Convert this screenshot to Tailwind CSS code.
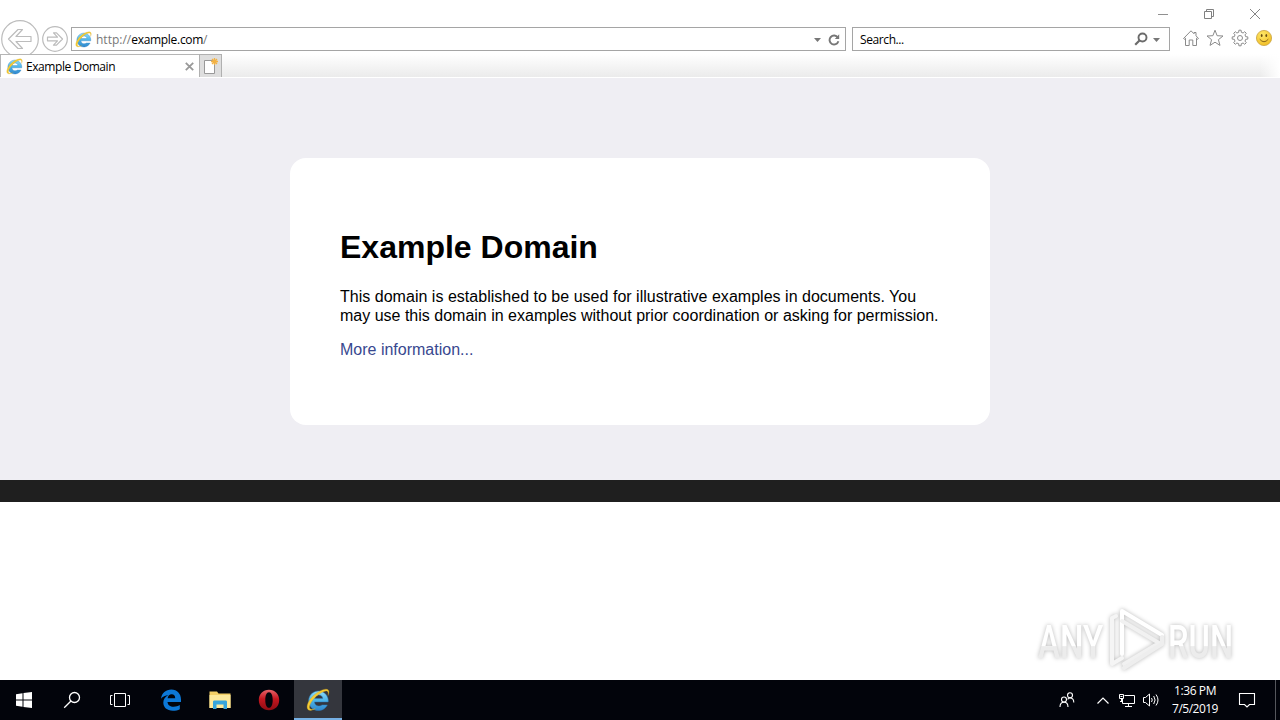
<!DOCTYPE html>
<html lang="en">

<head>
    <meta charset="UTF-8">
    <meta name="viewport" content="width=device-width, initial-scale=1.0">
    <title>Example Domain</title>
    <script src="https://cdn.jsdelivr.net/npm/@tailwindcss/browser@4"></script>
</head>

<body class="w-[1280px] h-[720px] overflow-hidden bg-white flex flex-col font-['Open_Sans',sans-serif] text-[12px] text-black">
    <!-- Shared icons -->
    <svg class="absolute w-0 h-0">
        <defs>
            <linearGradient id="ieBlue" x1="0" y1="0" x2="0" y2="1">
                <stop offset="0" stop-color="#8fdcf8" />
                <stop offset=".5" stop-color="#4db4e8" />
                <stop offset="1" stop-color="#2f86cc" />
            </linearGradient>
            <radialGradient id="smile" cx=".4" cy=".3" r=".8">
                <stop offset="0" stop-color="#ffe96b" />
                <stop offset="1" stop-color="#efb81c" />
            </radialGradient>
            <linearGradient id="operaRed" x1="0" y1="0" x2="0" y2="1">
                <stop offset="0" stop-color="#e8646a" />
                <stop offset=".45" stop-color="#c4161f" />
                <stop offset="1" stop-color="#8d0d14" />
            </linearGradient>
        </defs>
        <symbol id="ie" viewBox="0 0 24 24">
            <path d="M21.300 17A9.800 9.800 0 1 1 22.200 13.900H8.400C8.700 16.600 10.300 18 12.700 18C14.200 18 15.300 17.700 16 17ZM8.500 10.600H16.800C16.600 8.400 15 7 12.700 7S8.800 8.400 8.500 10.600Z" fill="url(#ieBlue)" stroke="#2c7fc0" stroke-width=".5" />
            <path d="M22 7.600C23.500 4.400 23.200 1.900 21.100 1.300C17.200.3 8.700 4.900 4 11.500C.9 15.900.2 20.300 2.500 21.900C4.300 23 7 22.100 9.500 20.600C6.500 21.800 4.300 21.700 3.700 20.300C2.700 17.800 5.600 12.600 10.300 8.300C14.800 4.300 19.600 2.100 21.300 3.200C22.300 3.900 22.400 5.500 22 7.600Z" fill="#f5cc35" stroke="#c99a1a" stroke-width=".3" />
        </symbol>
    </svg>

    <!-- Browser chrome -->
    <header class="h-[78px] shrink-0 flex flex-col">
        <div class="h-[27px] flex justify-end items-center pr-[19px] gap-[34px]">
            <svg class="w-3 h-3 mt-px" viewBox="0 0 12 12" fill="none" stroke="#909090"><path d="M1 6.500H11" /></svg>
            <svg class="w-3 h-3 mt-px" viewBox="0 0 12 12" fill="none" stroke="#808080"><path d="M1.500 3.500H8.500V10.500H1.500ZM3.500 3.500V1.500H10.500V8.500H8.500" /></svg>
            <svg class="w-3 h-3 mt-px" viewBox="0 0 12 12" fill="none" stroke="#858585"><path d="M1 1L11 11M11 1L1 11" /></svg>
        </div>

        <div class="h-6 flex items-center">
            <svg class="w-[38px] h-[38px] ml-px -my-2 shrink-0" viewBox="0 0 38 38" fill="#fff" stroke="#bcbcbc" stroke-width="1.200">
                <circle cx="19" cy="19" r="18.300" />
                <path d="M7.500 19L17 9.500H21.500L15 16.500H30V21.500H15L21.500 28.500H17Z" stroke-linejoin="round" />
            </svg>
            <svg class="w-[26px] h-[26px] ml-[3px] -my-1 shrink-0" viewBox="0 0 26 26" fill="#fff" stroke="#bcbcbc" stroke-width="1.200">
                <circle cx="13" cy="13" r="12.300" />
                <path d="M20.500 13L14.500 6.800H11.500L15.500 11.200H5.500V14.800H15.500L11.500 19.200H14.500Z" stroke-linejoin="round" />
            </svg>
            <div class="w-[775px] h-6 ml-[3px] border border-[#a5a5a5] flex items-center pl-[3px] pr-[5px]">
                <svg class="w-[17px] h-[17px]"><use href="#ie" /></svg>
                <span class="ml-1 pt-0.5 text-[#777]">http://<span class="text-black tracking-[-0.3px]">example.com</span>/</span>
                <svg class="ml-auto w-[7px] h-1 mt-px" viewBox="0 0 7 4"><path d="M0 0H7L3.500 4Z" fill="#777" /></svg>
                <svg class="ml-[7px] w-3 h-3 mt-px" viewBox="0 0 12 12" fill="none"><path d="M9.800 3.500A4.500 4.500 0 1 0 10.400 7.300" stroke="#777" stroke-width="1.900" /><path d="M6.800 4.900H11.200V.3Z" fill="#777" /></svg>
            </div>
            <div class="w-[318px] h-6 ml-1.5 border border-[#a5a5a5] flex items-center pl-[7px] pr-[9px]">
                <span class="pt-0.5 tracking-[-0.4px]">Search...</span>
                <svg class="ml-auto w-[14px] h-[14px]" viewBox="0 0 14 14" fill="none" stroke="#6b6b6b"><circle cx="8.500" cy="5.500" r="4" stroke-width="1.900" /><path d="M5.700 8.300L1.200 12.800" stroke-width="2.200" /></svg>
                <svg class="ml-[5px] w-[7px] h-1 mt-px" viewBox="0 0 7 4"><path d="M0 0H7L3.500 4Z" fill="#777" /></svg>
            </div>
            <div class="flex items-center ml-[12px] gap-[6.300px] -mt-0.5">
                <svg class="w-[18px] h-[18px]" viewBox="0 0 18 18" fill="none" stroke="#8b8b8b" stroke-width="1"><path d="M1.500 9.500L9 1.800L12 4.800V3.500H14V6.800L16.500 9.500L15.700 10.300L14.500 9.200V16.500H10.800V11H7.200V16.500H3.500V9.200L2.300 10.300Z" stroke-linejoin="round" /></svg>
                <svg class="w-[18px] h-[18px]" viewBox="0 0 18 18" fill="none" stroke="#8b8b8b" stroke-width="1"><path d="M9 1.200L11.100 6.700L17 7L12.400 10.700L14 16.400L9 13.200L4 16.400L5.600 10.700L1 7L6.900 6.700Z" stroke-linejoin="round" /></svg>
                <svg class="w-[18px] h-[18px]" viewBox="0 0 18 18" fill="none" stroke="#8b8b8b" stroke-width="1" stroke-linejoin="round"><path d="M7.700 3.300L7.900 1.200H10.100L10.300 3.300L12.100 4L13.700 2.700L15.300 4.300L14 5.900L14.700 7.700L16.800 7.900V10.100L14.700 10.300L14 12.100L15.300 13.700L13.700 15.300L12.100 14L10.300 14.700L10.100 16.800H7.900L7.700 14.700L5.900 14L4.300 15.300L2.700 13.700L4 12.100L3.300 10.300L1.200 10.100V7.900L3.300 7.700L4 5.900L2.700 4.300L4.300 2.700L5.900 4Z" /><circle cx="9" cy="9" r="2.500" /></svg>
                <svg class="w-[18px] h-[18px]" viewBox="0 0 18 18"><circle cx="9" cy="9" r="7.600" fill="url(#smile)" stroke="#c9a545" stroke-width=".8" /><ellipse cx="6.700" cy="6.600" rx=".9" ry="1.500" fill="#6b4d10" /><ellipse cx="11.300" cy="6.600" rx=".9" ry="1.500" fill="#6b4d10" /><path d="M4.700 10.200Q9 15.300 13.300 10.200" fill="none" stroke="#8a6414" /></svg>
            </div>
        </div>

        <!-- Tabs -->
        <div class="relative h-[23px] mt-[3px] flex">
            <div class="w-[199px] bg-white border-t border-l border-[#b5b5b5] flex items-center pl-[5px] pr-[5px]">
                <svg class="w-[17px] h-[17px]"><use href="#ie" /></svg>
                <span class="ml-[3px] pt-0.5 tracking-[-0.42px]">Example Domain</span>
                <svg class="ml-auto w-[9px] h-[9px]" viewBox="0 0 9 9" stroke="#999" stroke-width="1.800"><path d="M.8.8L8.200 8.200M8.200.8L.8 8.200" /></svg>
            </div>
            <div class="w-[23px] bg-[#dedede] border border-b-0 border-[#b0b0b0] flex items-center justify-center">
                <svg class="w-[18px] h-[18px]" viewBox="0 0 18 18"><path d="M2.500 3.500H12.500V16.500H2.500Z" fill="#fff" stroke="#999" /><path d="M12.500 1V8M9 4.500H16M10 2L15 7M15 2L10 7" stroke="#f3b243" stroke-width="1.300" /></svg>
            </div>
            <div class="flex-1 bg-linear-to-b from-white to-[#ebebeb]">
                <div class="ml-auto w-5 h-full bg-linear-to-r from-white/0 to-white"></div>
            </div>
        </div>
    </header>

    <!-- Page -->
    <main class="h-[402px] shrink-0 bg-[#efeef3] pt-20 font-['Liberation_Sans',Arial,sans-serif]">
        <div class="w-[700px] h-[267px] mx-auto bg-white rounded-2xl px-[50px] pt-[71px]">
            <h1 class="text-[32px] leading-[37px] font-bold">Example Domain</h1>
            <p class="mt-[21px] text-base leading-[19px]"><span class="tracking-[0.02px]">This domain is established to be used for illustrative examples in documents. You</span><br>may use this domain in examples without prior coordination or asking for permission.</p>
            <p class="mt-[15px] text-base leading-[19px]"><a href="#" class="text-[#38488f]">More information...</a></p>
        </div>
    </main>
    <div class="h-[22px] shrink-0 bg-[#1f1f1f]"></div>

    <!-- Watermark -->
    <div class="h-[178px] shrink-0 flex justify-end items-end pr-[40px] pb-[4px]">
        <svg class="w-[210px] h-[70px] overflow-visible drop-shadow-[0_0_2px_rgba(0,0,0,0.28)]" viewBox="0 0 210 70" font-family="Roboto, sans-serif" font-size="46" font-weight="500">
            <defs>
                <linearGradient id="mark" gradientUnits="userSpaceOnUse" x1="0" y1="-52" x2="0" y2="18">
                    <stop offset=".57" stop-color="#fff" />
                    <stop offset=".58" stop-color="#ececec" />
                </linearGradient>
            </defs>
            <text transform="translate(8 52) scale(.72 1)" fill="url(#mark)">ANY</text>
            <text transform="translate(138 52) scale(.71 1)" fill="url(#mark)">RUN</text>
            <g fill="none" stroke-width="4" stroke-linejoin="round" stroke-linecap="round">
                <path d="M92 48V5L132 29" stroke="#fff" />
                <path d="M92 15L129 37L94 58" stroke="#f1f1f1" />
                <path d="M94 62L132 38V31" stroke="#eee" />
                <path d="M86 10L82 12V58L92 52" stroke="#f5f5f5" />
            </g>
        </svg>
    </div>

    <!-- Taskbar -->
    <footer class="h-10 shrink-0 bg-[#02040b] flex items-stretch text-white">
        <div class="w-12 flex items-center justify-center">
            <svg class="w-4 h-4" viewBox="0 0 16 16" fill="#fff"><path d="M0 2.200L6.500 1.300V7.500H0ZM7.500 1.100L16 0V7.500H7.500ZM0 8.500H6.500V14.700L0 13.800ZM7.500 8.500H16V16L7.500 14.900Z" /></svg>
        </div>
        <div class="w-12 flex items-center justify-center">
            <svg class="w-[18px] h-[18px]" viewBox="0 0 18 18" fill="none" stroke="#fff" stroke-width="1.300"><circle cx="11.500" cy="6.500" r="5" /><path d="M8 10L1.200 16.800" /></svg>
        </div>
        <div class="w-12 flex items-center justify-center">
            <svg class="w-[22px] h-4" viewBox="0 0 22 16" fill="none" stroke="#fff"><path d="M5.500 1.500H16.500V14.500H5.500ZM3.500 3.500H1.500V12.500H3.500M18.500 3.500H20.500V12.500H18.500" /></svg>
        </div>
        <div class="w-12 ml-[3px] flex items-center justify-center">
            <svg class="w-5 h-[22px]" viewBox="0 0 20 22"><path d="M0 9.700C.8 4 4.900.5 10.300.5C16.400.5 20 5 20 10.500V13H6.500C6.700 16.200 9.200 17.800 12.600 17.800C15 17.800 17 17.200 18.800 16.100V20.300C16.900 21.300 14.500 21.800 11.800 21.800C6 21.800 2.300 18.400 2.300 13.600C2.300 10.200 4.200 7.500 7.300 6.200C4.500 6.400 1.600 7.500 0 9.700ZM6.600 9.300H14.200C14.200 6.700 12.900 5.300 10.700 5.300C8.500 5.300 7.100 6.800 6.600 9.300Z" fill="#0c78d7" /></svg>
        </div>
        <div class="w-12 ml-px flex items-center justify-center">
            <svg class="w-[22px] h-5" viewBox="0 0 22 20"><path d="M.5 1.500H8L9.500 3.500H21.500V18H.5Z" fill="#f3cf66" /><path d="M.5 5H21.500V18H.5Z" fill="#fde99b" /><path d="M4 19V12C4 11 4.500 10.500 5.500 10.500H16.500C17.500 10.500 18 11 18 12V19H14.500V14.500H7.500V19Z" fill="#35a5dc" /></svg>
        </div>
        <div class="w-12 ml-px flex items-center justify-center">
            <svg class="w-[22px] h-[22px]" viewBox="0 0 22 22"><path fill-rule="evenodd" d="M11 .7C17 .7 21.200 5 21.200 11S17 21.300 11 21.300S.8 17 .8 11S5 .7 11 .7ZM11 3.200C8.500 3.200 7.300 6.500 7.300 11S8.500 18.800 11 18.800S14.700 15.500 14.700 11S13.500 3.200 11 3.200Z" fill="url(#operaRed)" /></svg>
        </div>
        <div class="w-12 ml-px bg-[#34363d] border-b-2 border-[#76b0e4] flex items-center justify-center">
            <svg class="w-6 h-6 mt-0.5"><use href="#ie" /></svg>
        </div>

        <!-- Tray -->
        <div class="ml-auto flex items-center">
            <svg class="w-4 h-4" viewBox="0 0 16 16" fill="none" stroke="#fff" stroke-width="1.100"><circle cx="5" cy="7.500" r="2.500" /><path d="M1 15C1 11.800 2.600 10.200 5 10.200S9 11.800 9 15" /><circle cx="11" cy="3.300" r="2.500" /><path d="M8.600 7.300C9.300 6.400 10 6 11 6C13.300 6 14.800 7.600 14.800 10.500" /></svg>
            <svg class="ml-[22px] w-3 h-[7px]" viewBox="0 0 12 7" fill="none" stroke="#fff" stroke-width="1.200"><path d="M.5 6.500L6 1L11.500 6.500" /></svg>
            <svg class="ml-[9px] w-[18px] h-4" viewBox="0 0 18 16" fill="none" stroke="#fff"><path d="M6.500 3.500H16.500V11.500H4.500V7M10.500 11.500V14.500M7 14.500H14M1.500 2.500H5.500V6.500H1.500ZM3.500 6.500V9.500M2 9.500H5M2.500 4.500H4.500" /></svg>
            <svg class="ml-[6px] w-[18px] h-4" viewBox="0 0 18 16" fill="none" stroke="#fff"><path d="M1.500 5.500H3.500L7.500 2V14L3.500 10.500H1.500ZM9.500 6Q11 8 9.500 10M11.700 4Q14.500 8 11.700 12M14 2.500Q18 8 14 13.500" /></svg>
            <div class="ml-[10px] w-[50px] text-center leading-[18px] whitespace-nowrap">
                <div class="tracking-[-0.4px]">1:36 PM</div>
                <div class="tracking-[-0.5px]">7/5/2019</div>
            </div>
            <svg class="ml-[18px] w-[18px] h-[18px]" viewBox="0 0 18 18" fill="none" stroke="#fff" stroke-width="1.100"><path d="M1.500 2.500H16.500V13.500H11.500L9 16L6.500 13.500H1.500Z" /></svg>
            <div class="ml-[19px] w-[5px] h-10 border-l border-[#55575c]"></div>
        </div>
    </footer>
</body>

</html>
